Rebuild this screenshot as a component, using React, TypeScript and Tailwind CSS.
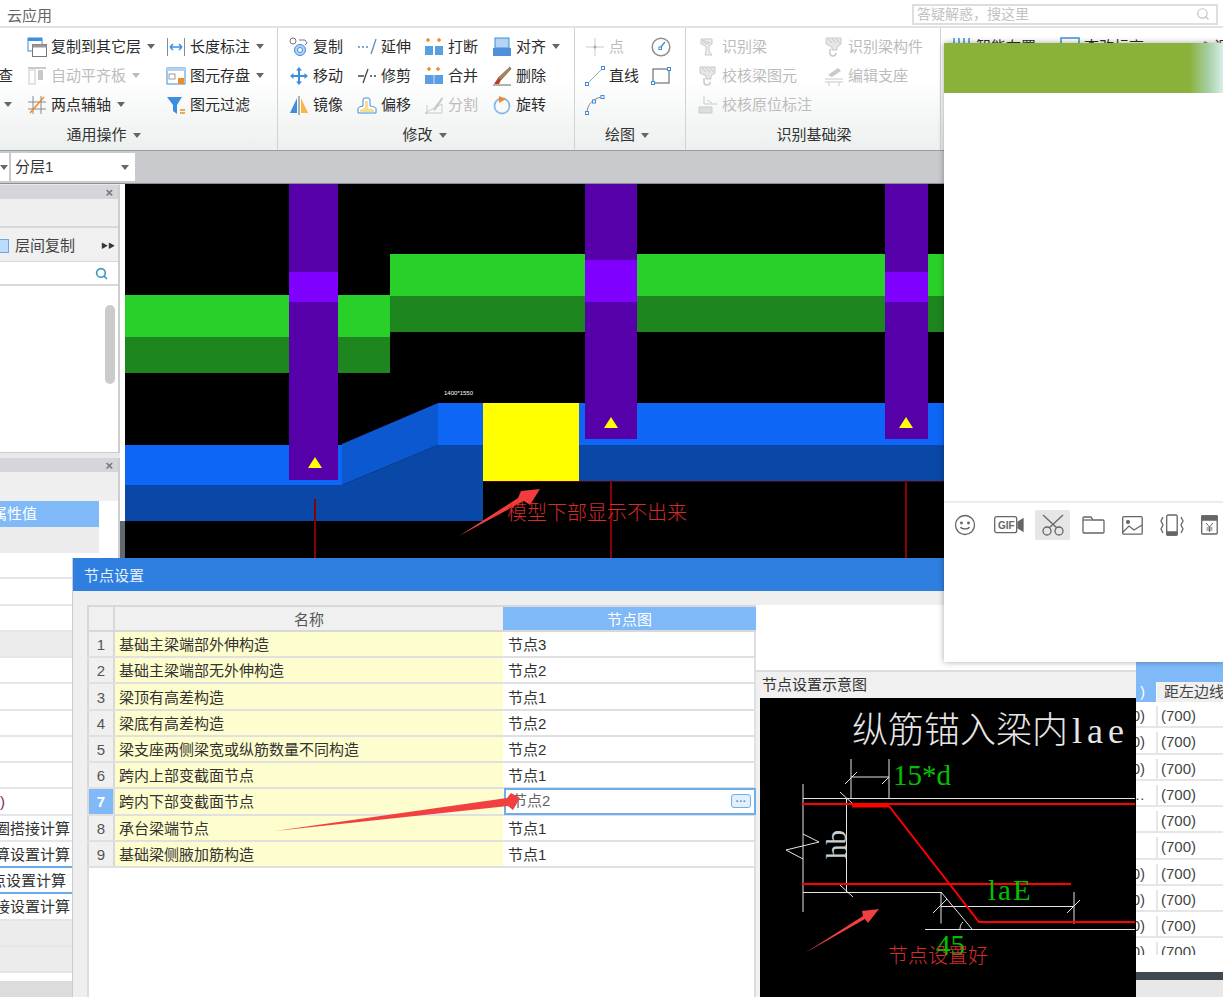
import type { ReactNode } from "react";
import { Search } from "lucide-react";

const BLUE = "#3d8ede";
const LIGHT = "#b5d3f2";
const ORANGE = "#f08a24";
const GRAY = "#8a8a8a";
const OFF = "#c9c9c9";

// ribbon icons, all on a 20x20 box
const icons: Record<string, ReactNode> = {
  copyLayer: (
    <>
      <rect x="1" y="1" width="14" height="13" fill="#fff" stroke={BLUE} />
      <rect x="1" y="1" width="14" height="3" fill={BLUE} />
      <rect x="5.5" y="7.5" width="14" height="12" fill="#fff" stroke="#777" />
      <rect x="5.5" y="7.5" width="14" height="3" fill="#999" />
    </>
  ),
  autoAlign: (
    <>
      <path d="M1 2h18" stroke={OFF} strokeWidth="2" />
      <rect x="2" y="4" width="6" height="14" fill="#fff" stroke={OFF} />
      <rect x="11" y="4" width="5" height="10" fill={OFF} />
    </>
  ),
  twoPoint: (
    <>
      <path d="M6 1v18M14 1v18M1 7h18M1 14h18" stroke={GRAY} fill="none" />
      <path d="M3 18L17 2" stroke={ORANGE} strokeWidth="1.5" />
    </>
  ),
  lengthDim: (
    <>
      <path d="M1.5 1v18M18.500 1v18" stroke={GRAY} />
      <path d="M4 10h12M4 10l3-3M4 10l3 3M16 10l-3-3M16 10l-3 3" stroke={BLUE} strokeWidth="1.5" fill="none" />
    </>
  ),
  saveElem: (
    <>
      <rect x="1" y="2" width="18" height="16" fill="#fff" stroke={BLUE} />
      <rect x="1" y="2" width="18" height="3" fill={LIGHT} />
      <rect x="3" y="8" width="6" height="5" fill="none" stroke="#999" />
      <rect x="12" y="12" width="6" height="6" fill={ORANGE} />
    </>
  ),
  filter: (
    <>
      <path d="M1 2h15l-5 8v9l-4-3v-6z" fill={BLUE} />
      <path d="M14 15h5M14 18h5" stroke={ORANGE} strokeWidth="1.500" />
    </>
  ),
  copy: (
    <>
      <circle cx="4" cy="4" r="3" fill="#fff" stroke="#777" />
      <path d="M10 3h6l2 3-2 2" fill="none" stroke="#777" />
      <circle cx="11" cy="13" r="5.500" fill={LIGHT} stroke={BLUE} />
      <circle cx="11" cy="13" r="2.500" fill="#fff" stroke={BLUE} />
    </>
  ),
  move: (
    <path
      d="M10 1l3 3.500h-2V9h4.500V7l3.500 3-3.500 3v-2H11v4.500h2L10 19l-3-3.500h2V11H4.500v2L1 10l3.500-3v2H9V4.500H7z"
      fill={BLUE}
    />
  ),
  extend: <path d="M1 10h2M5 10h2M9 10h2M14 17l5-15" stroke="#5b8dbf" strokeWidth="1.300" fill="none" />,
  trim: <path d="M1 10h6M13 10h2M17 10h2M6 17l5-14" stroke="#444" strokeWidth="1.300" fill="none" />,
  breakEl: (
    <>
      <path d="M4 1v4M2 3h4M15 1v4M13 3h4" stroke={ORANGE} strokeWidth="1.500" />
      <rect x="1" y="9" width="8" height="9" fill="#5a9fe2" />
      <rect x="11" y="9" width="8" height="9" fill="#5a9fe2" />
    </>
  ),
  merge: (
    <>
      <path d="M5 1v4M3 3h4M14 1v4M12 3h4" stroke={ORANGE} strokeWidth="1.500" />
      <rect x="1" y="9" width="18" height="9" fill="#5a9fe2" />
      <path d="M10 9v9" stroke="#cfe2f6" />
    </>
  ),
  align: (
    <>
      <rect x="3" y="1" width="14" height="10" fill={LIGHT} stroke={BLUE} />
      <rect x="1" y="11" width="18" height="8" fill="#4f90d8" />
    </>
  ),
  brush: (
    <>
      <path d="M18 1l1 2L9 14l-3-2z" fill="#a98655" stroke="#6a5232" strokeWidth=".6" />
      <path d="M6 12l3 2-2 4H2z" fill="#b5431a" />
      <path d="M1 19h18" stroke="#666" />
    </>
  ),
  mirror: (
    <>
      <path d="M8 3L1 18h7z" fill={BLUE} />
      <path d="M12 3l7 15h-7z" fill="#f4b942" />
      <path d="M10 1v19" stroke="#666" />
    </>
  ),
  offset: (
    <>
      <path d="M1 18v-4c0-2 2-2 5-3V5a2 2 0 012-2h3a2 2 0 012 2v6c4 1 6 1 6 3v4z" fill="#fff" stroke={BLUE} />
      <path d="M3 17v-2c0-1 3-1 5-2V6h3v7c2 1 6 1 6 2v2z" fill="#f8dc92" />
    </>
  ),
  split: (
    <>
      <path d="M1 18h17V9L1 18zM3 10v9" fill="none" stroke={OFF} />
      <path d="M9 14l9-12 1 2-8 12z" fill={OFF} />
    </>
  ),
  rotate: (
    <>
      <circle cx="10" cy="11" r="7.500" fill="none" stroke="#8bb9e8" strokeWidth="1.800" />
      <path d="M7 1l7 3-7 4z" fill={ORANGE} />
    </>
  ),
  point: (
    <>
      <path d="M1 10h18M10 1v18" stroke={OFF} />
      <circle cx="10" cy="10" r="1.500" fill="#aaa" />
    </>
  ),
  line: (
    <>
      <path d="M2 18L18 2" stroke="#8aa8c8" />
      <rect x="0.500" y="16.500" width="3" height="3" fill="#fff" stroke={BLUE} />
      <rect x="16.500" y="0.500" width="3" height="3" fill="#fff" stroke={BLUE} />
    </>
  ),
  arc: (
    <>
      <path d="M2 18C2 10 8 3 17 2" fill="none" stroke="#888" />
      <rect x="0.500" y="16.500" width="3" height="3" fill="#fff" stroke={BLUE} />
      <rect x="7.500" y="5" width="3" height="3" fill="#fff" stroke={BLUE} />
      <rect x="16" y="0.500" width="3" height="3" fill="#fff" stroke={BLUE} />
    </>
  ),
  dial: (
    <>
      <circle cx="10" cy="10" r="8.800" fill="#fff" stroke="#8a8f94" strokeWidth="1.500" />
      <path d="M9 11l5-6" stroke={BLUE} strokeWidth="1.300" />
      <rect x="8" y="10" width="2.500" height="2.500" fill="#fff" stroke={BLUE} />
    </>
  ),
  rectEl: (
    <>
      <rect x="2" y="3" width="16" height="14" fill="none" stroke="#555" />
      <rect x="0.500" y="15.500" width="3" height="3" fill="#fff" stroke={BLUE} />
      <rect x="16.500" y="1.500" width="3" height="3" fill="#fff" stroke={BLUE} />
    </>
  ),
  beam: (
    <>
      <path d="M3 2h11v5l-3 2v5l3 4H7l1-4V9L3 7z" fill="#eee" stroke={OFF} />
      <path d="M4 3l9 3M4 5l7 2" stroke={OFF} />
    </>
  ),
  beamCheck: (
    <>
      <path d="M2 1h15v6l-4 3v3H8v-3L2 7z" fill="#e6e6e6" stroke={OFF} />
      <path d="M4 2l4 4M8 2l4 4M12 2l4 4" stroke={OFF} />
      <path d="M6 12v4a3 3 0 006 0" fill="none" stroke={OFF} strokeWidth="1.500" />
    </>
  ),
  origMark: (
    <>
      <path d="M6 1v8h13" fill="none" stroke={OFF} />
      <path d="M1 12h13v6H1z" fill="#ddd" stroke={OFF} />
      <path d="M9 5l5 3" stroke={OFF} />
    </>
  ),
  support: (
    <>
      <path d="M4 9l10-7 3 3-9 6z" fill={OFF} />
      <path d="M1 13h18M1 16h18M5 16v4M15 16v4" stroke={OFF} />
    </>
  ),
  smart: <path d="M2 1v16M7 1v16M12 1v16M17 1v16M0 8h19" stroke={BLUE} strokeWidth="1.500" />,
  level: (
    <>
      <rect x="1" y="1" width="18" height="12" fill="#fff" stroke={BLUE} strokeWidth="1.500" />
      <path d="M3 17h14" stroke={ORANGE} />
    </>
  ),
  tool: <path d="M2 18L15 4l3 2L6 19z" fill="#888" />,
};

type Item = { icon?: string; text?: string; caret?: boolean; off?: boolean };

function Caret({ light }: { light?: boolean }) {
  return (
    <svg width="8" height="5" viewBox="0 0 8 5" className="shrink-0">
      <path d="M0 0h8L4 5z" fill={light ? "#bbb" : "#666"} />
    </svg>
  );
}

function RibbonItem({ icon, text, caret, off }: Item) {
  return (
    <div className={`flex h-[29px] items-center whitespace-nowrap ${off ? "text-[#bcbcbc]" : "text-[#2b2b2b]"}`}>
      {icon && (
        <svg width="20" height="20" viewBox="0 0 20 20" className="mr-1 shrink-0">
          {icons[icon]}
        </svg>
      )}
      {text}
      {caret && (
        <span className="ml-[6px]">
          <Caret light={off} />
        </span>
      )}
    </div>
  );
}

function RibbonGroup({
  cls,
  labelCls,
  label,
  caret,
  cols,
}: {
  cls: string;
  labelCls: string;
  label: string;
  caret?: boolean;
  cols: { w: string; items: Item[] }[];
}) {
  return (
    <div className={`flex shrink-0 flex-col border-r border-[#d0d3d6] ${cls}`}>
      <div className="flex h-[91px] pt-[4px]">
        {cols.map((c, i) => (
          <div key={i} className={`shrink-0 ${c.w}`}>
            {c.items.map((it, j) => (
              <RibbonItem key={j} {...it} />
            ))}
          </div>
        ))}
      </div>
      <div className={`flex h-[31px] items-center justify-center gap-[6px] pt-[1px] text-[#333] ${labelCls}`}>
        {label}
        {caret && <Caret />}
      </div>
    </div>
  );
}

function Ribbon() {
  return (
    <div className="flex h-[123px] overflow-hidden border-b border-[#9a9c9e] bg-[linear-gradient(180deg,#ffffff_40%,#edf0f0_100%)]">
      <RibbonGroup
        cls="w-[278px]"
        labelCls="pr-[70px]"
        label="通用操作"
        caret
        cols={[
          {
            w: "w-[27px] ml-[-2px] mr-[2px]",
            items: [{}, { text: "查" }, { caret: true }],
          },
          {
            w: "w-[139px]",
            items: [
              { icon: "copyLayer", text: "复制到其它层", caret: true },
              { icon: "autoAlign", text: "自动平齐板", caret: true, off: true },
              { icon: "twoPoint", text: "两点辅轴", caret: true },
            ],
          },
          {
            w: "w-[111px]",
            items: [
              { icon: "lengthDim", text: "长度标注", caret: true },
              { icon: "saveElem", text: "图元存盘", caret: true },
              { icon: "filter", text: "图元过滤" },
            ],
          },
        ]}
      />
      <RibbonGroup
        cls="w-[297px] pl-[11px]"
        labelCls="pr-[14px]"
        label="修改"
        caret
        cols={[
          {
            w: "w-[68px]",
            items: [
              { icon: "copy", text: "复制" },
              { icon: "move", text: "移动" },
              { icon: "mirror", text: "镜像" },
            ],
          },
          {
            w: "w-[67px]",
            items: [
              { icon: "extend", text: "延伸" },
              { icon: "trim", text: "修剪" },
              { icon: "offset", text: "偏移" },
            ],
          },
          {
            w: "w-[68px]",
            items: [
              { icon: "breakEl", text: "打断" },
              { icon: "merge", text: "合并" },
              { icon: "split", text: "分割", off: true },
            ],
          },
          {
            w: "w-[82px]",
            items: [
              { icon: "align", text: "对齐", caret: true },
              { icon: "brush", text: "删除" },
              { icon: "rotate", text: "旋转" },
            ],
          },
        ]}
      />
      <RibbonGroup
        cls="w-[111px] pl-[10px]"
        labelCls="pr-[16px]"
        label="绘图"
        caret
        cols={[
          {
            w: "w-[66px]",
            items: [{ icon: "point", text: "点", off: true }, { icon: "line", text: "直线" }, { icon: "arc" }],
          },
          {
            w: "w-[24px]",
            items: [{ icon: "dial" }, { icon: "rectEl" }],
          },
        ]}
      />
      <RibbonGroup
        cls="w-[255px] pl-[12px]"
        labelCls="pr-[10px]"
        label="识别基础梁"
        cols={[
          {
            w: "w-[126px]",
            items: [
              { icon: "beam", text: "识别梁", off: true },
              { icon: "beamCheck", text: "校核梁图元", off: true },
              { icon: "origMark", text: "校核原位标注", off: true },
            ],
          },
          {
            w: "w-[110px]",
            items: [
              { icon: "beamCheck", text: "识别梁构件", off: true },
              { icon: "support", text: "编辑支座", off: true },
            ],
          },
        ]}
      />
      <div className="flex pt-[4px] pl-[11px]">
        <div className="w-[108px]">
          <RibbonItem icon="smart" text="智能布置" />
        </div>
        <div className="w-[130px]">
          <RibbonItem icon="level" text="查改标高" />
        </div>
        <RibbonItem icon="tool" text="调" />
      </div>
    </div>
  );
}

const leftRows: { text?: string; gray?: boolean; line?: boolean; inset?: boolean }[] = [
  {},
  {},
  {},
  { gray: true },
  {},
  {},
  {},
  {},
  {},
  { text: ")" },
  { text: "圈搭接计算" },
  { text: "算设置计算", line: true },
  { text: "点设置计算", line: true, inset: true },
  { text: "接设置计算" },
  { gray: true },
  { gray: true },
];

function PanelTitle() {
  return (
    <div className="flex h-[14px] items-center justify-end bg-[#d4d6db] pr-[5px] text-[13px] leading-none font-bold text-[#777]">×</div>
  );
}

function LeftPanels() {
  return (
    <div className="flex w-[120px] shrink-0 flex-col bg-[#e9e9e9] pt-px">
      <div className="flex h-[268px] flex-col border-r-2 border-b border-[#cdcdcd] bg-white">
        <PanelTitle />
        <div className="h-[29px] border-b-2 border-[#d8d8d8] bg-[#efefef]" />
        <div className="flex h-[34px] items-center border-b border-[#d8d8d8] bg-[#f0f0f0] pt-[3px]">
          <div className="h-[14px] w-[9px] border border-l-0 border-[#6ca8e6] bg-[#bcdcfa]" />
          <span className="ml-[6px] text-[#444]">层间复制</span>
          <span className="ml-auto pr-[3px] text-[7px] text-[#333]">▶▶</span>
        </div>
        <div className="flex h-[24px] items-center justify-end border-b-2 border-[#d8d8d8] pr-[10px]">
          <Search size={13} strokeWidth={3} className="text-[#3f94c4]" />
        </div>
        <div className="flex flex-1 justify-end pt-[19px] pr-[3px]">
          <div className="h-[79px] w-[10px] rounded-full bg-[#cbcbcb]" />
        </div>
      </div>
      <div className="mt-[5px] flex flex-1 flex-col border-r-2 border-[#cdcdcd] bg-white">
        <PanelTitle />
        <div className="h-[29px] bg-[#efefef]" />
        <div className="flex h-[26px] w-[99px] items-center justify-end bg-[#7fb9f8] pr-[62px] whitespace-nowrap text-white">属性值</div>
        <div className="h-[26px] w-[99px] bg-[#ececec]" />
        <div className="flex h-[420px] flex-col">
          {leftRows.map((r, i) => (
            <div
              key={i}
              className={`flex flex-1 items-center border-b-2 pt-[2px] whitespace-nowrap text-[#333] ${
                r.line ? "border-[#6aa9ea]" : "border-[#e6e6e6]"
              } ${r.gray ? "bg-[#ececec]" : "bg-white"}`}
            >
              {r.text === ")" ? (
                <span className="text-[#7a2a6a]">)</span>
              ) : (
                <span className={`flex w-[70px] justify-end overflow-hidden ${r.inset ? "pr-[4px]" : ""}`}>
                  <span className="shrink-0">{r.text}</span>
                </span>
              )}
            </div>
          ))}
        </div>
        <div className="h-[8px]" />
        <div className="flex-1 bg-[#dcdcdc]" />
      </div>
    </div>
  );
}

function CadView() {
  return (
    <svg width="819" height="374" viewBox="125 184 819 374" className="block shrink-0 bg-black">
      <rect x="125" y="295" width="265" height="42" fill="#2ad02a" />
      <rect x="125" y="337" width="265" height="36" fill="#1e861e" />
      <rect x="390" y="254" width="554" height="42" fill="#2ad02a" />
      <rect x="390" y="296" width="554" height="36" fill="#1e861e" />

      <path d="M125 445h217v40H125z" fill="#0d66f5" />
      <path d="M342 444l96-41v42l-96 40z" fill="#0b58d0" />
      <path d="M125 485h217l96-40h45v76H125z" fill="#0a48a8" />
      <rect x="438" y="403" width="45" height="42" fill="#0d66f5" />
      <rect x="579" y="403" width="365" height="42" fill="#0d66f5" />
      <rect x="579" y="445" width="365" height="36" fill="#0a48a8" />
      <rect x="483" y="403" width="96" height="78" fill="#ffff00" />

      <path d="M315 499v59M611 481v77M906 481v77" stroke="#8b0000" strokeWidth="2" />
      <path d="M483 481.500h460" stroke="#5a0000" />

      <rect x="289" y="184" width="49" height="296" fill="#5500a8" />
      <rect x="585" y="184" width="52" height="255" fill="#5500a8" />
      <rect x="885" y="184" width="43" height="255" fill="#5500a8" />
      <rect x="289" y="272" width="49" height="30" fill="#8000ff" />
      <rect x="585" y="260" width="52" height="42" fill="#8000ff" />
      <rect x="885" y="272" width="43" height="30" fill="#8000ff" />

      <path d="M315 457l7 11h-14zM611 417l7 11h-14zM906 417l7 11h-14z" fill="#ffff00" />

      <text x="444" y="395" fontSize="6" fill="#fff" fontFamily="Liberation Sans">1400*1550</text>

      <path d="M459 536l59-38 3-7 19-2-10 16-6-4z" fill="#f03c3c" />
      <text x="507" y="520" fontSize="20" fill="#d42b2b" fontFamily="Noto Sans CJK SC" fontWeight="300">模型下部显示不出来</text>
    </svg>
  );
}

function BackTable() {
  const left = ["0)", "0)", "0)", "…", "", "", "0)", "0)", "0)", "0)"];
  return (
    <div className="flex h-[335px] w-[87px] flex-col bg-white">
      <div className="h-[20px] bg-[#7fb9f8]" />
      <div className="flex h-[20px] whitespace-nowrap">
        <div className="w-[20px] bg-[#7fb9f8] pr-[11px] text-right text-white">)</div>
        <div className="flex-1 overflow-hidden border-l border-white bg-[#f0f0f0] pl-[7px] text-[#444]">距左边线</div>
      </div>
      <div className="h-[253px] overflow-hidden">
        {left.map((t, i) => (
          <div key={i} className="flex h-[26.250px] border-b-2 border-[#e6e6e6] pt-[4px] text-[#444]">
            <div className="flex w-[20px] items-center justify-end overflow-hidden pr-[11px] whitespace-nowrap">{t}</div>
            <div className="flex flex-1 items-center border-l-2 border-[#e6e6e6] pl-[3px]">(700)</div>
          </div>
        ))}
      </div>
      <div className="h-[17px]" />
      <div className="h-[8px] bg-[#404850]" />
      <div className="flex-1 bg-[#e8e8e8]" />
    </div>
  );
}

const nodeRows = [
  ["基础主梁端部外伸构造", "节点3"],
  ["基础主梁端部无外伸构造", "节点2"],
  ["梁顶有高差构造", "节点1"],
  ["梁底有高差构造", "节点2"],
  ["梁支座两侧梁宽或纵筋数量不同构造", "节点2"],
  ["跨内上部变截面节点", "节点1"],
  ["跨内下部变截面节点", "节点2"],
  ["承台梁端节点", "节点1"],
  ["基础梁侧腋加筋构造", "节点1"],
];

function NodeTable() {
  return (
    <div className="flex w-[669px] shrink-0 flex-col bg-white">
      <div className="flex h-[27px] border-y-2 border-[#d8d8d8] bg-[#f0f0f0] text-[#555]">
        <div className="w-[28px] shrink-0 border-x-2 border-[#d8d8d8]" />
        <div className="flex w-[388px] shrink-0 items-center justify-center pt-[2px]">名称</div>
        <div className="flex flex-1 items-center justify-center bg-[#7fb9f8] pt-[2px] text-white">节点图</div>
      </div>
      <div className="flex h-[236px] flex-col">
        {nodeRows.map(([name, node], i) => {
          const active = i === 6;
          return (
            <div key={name} className="flex flex-1 border-b-2 border-[#e0e0e0]">
              <div
                className={`flex w-[28px] shrink-0 items-center justify-center border-x-2 border-[#d8d8d8] pt-[2px] ${
                  active ? "bg-[#7fb9f8] font-bold text-white" : "bg-[#f0f0f0] text-[#555]"
                }`}
              >
                {i + 1}
              </div>
              <div className="flex w-[388px] shrink-0 items-center bg-[#fefdcd] pt-[2px] pl-[4px] whitespace-nowrap text-[#333]">{name}</div>
              {active ? (
                <div className="-my-[1px] ml-[1px] flex flex-1 items-center border-2 border-[#6caeee] pr-[3px] pl-[6px] text-[#666]">
                  {node}
                  <div className="ml-auto flex h-[14px] w-[20px] items-center justify-center rounded-[3px] border border-[#6caeee] bg-[#e3effb] text-[11px] leading-none font-bold text-[#5a8fc8]">
                    ···
                  </div>
                </div>
              ) : (
                <div className="ml-[1px] flex flex-1 items-center border-r-2 border-[#e0e0e0] pt-[2px] pl-[4px] text-[#333]">{node}</div>
              )}
            </div>
          );
        })}
      </div>
      <div className="flex-1 border-x-2 border-[#dcdcdc]" />
    </div>
  );
}

function Schematic() {
  const serif = "Liberation Serif";
  return (
    <svg width="376" height="299" viewBox="760 698 376 299" className="block bg-black">
      <text x="852" y="743" fontSize="36" fill="#e6e6e6" fontFamily="Noto Sans CJK SC" fontWeight="300">
        纵筋锚入梁内
        <tspan dx="4" fontFamily={serif} letterSpacing="5">lae</tspan>
      </text>
      <g stroke="#e4e4e4" fill="none">
        <path d="M803 784v128M803 798.500h332M851 759v39M889 759v39M851 777h38M845 784l12-12M882 784l7-7" />
        <path d="M846.500 798v94M840 792l13 12M840 885l13 12" />
        <path d="M803 834l16 8-33 8 17 9" />
        <path d="M803 892.500h138v31M941 892l31 37M933 913l14-14M941 906.500h133M1074 892v32M1067 913l13-13M925 929.500h210M960 929c0-3 1-5 3-7" />
      </g>
      <g stroke="#ff0000" strokeWidth="2" fill="none">
        <path d="M802 804h333M802 884h269M889 806l90 116h156" />
        <path d="M852 806h37" strokeWidth="3" />
      </g>
      <text x="893" y="785" fontSize="29" fill="#00c000" fontFamily={serif}>15*d</text>
      <text x="988" y="900" fontSize="29" fill="#00c000" fontFamily={serif} letterSpacing="2">laE</text>
      <text x="936" y="955" fontSize="29" fill="#00c000" fontFamily={serif}>45</text>
      <text x="846" y="859" fontSize="29" fill="#c8d0d0" fontFamily={serif} transform="rotate(-90 846 859)">hb</text>
      <text x="888" y="963" fontSize="20" fill="#d92c2c" fontFamily="Noto Sans CJK SC" fontWeight="300">节点设置好</text>
      <path d="M805 953l58-37-1-5 17-2-11 14-3-4z" fill="#f04040" />
    </svg>
  );
}

function NodeDialog() {
  return (
    <div className="absolute top-[558px] left-[72px] z-10 flex h-[439px] w-[1064px] flex-col border-l border-[#c5ccd8] bg-[#efefef]">
      <div className="flex h-[33px] shrink-0 items-center bg-[#2e7fe0] pt-[2px] pl-[11px] text-[#e8f1fc]">节点设置</div>
      <div className="flex flex-1 pt-[14px] pl-[14px]">
        <NodeTable />
        <div className="flex flex-1 flex-col">
          <div className="h-[65px] bg-white" />
          <div className="flex flex-1 flex-col border-t-2 border-[#dcdcdc] bg-[#f0f0f0] pl-[4px]">
            <div className="flex h-[26px] items-center pl-[2px] text-[#333]">节点设置示意图</div>
            <Schematic />
          </div>
        </div>
      </div>
      {/* 红色标注箭头 */}
      <svg width="260" height="50" viewBox="270 790 260 50" className="absolute top-[232px] left-[197px]">
        <path d="M275 831l232-33 4-5 9 5-7 12-5-4z" fill="#f24040" />
      </svg>
    </div>
  );
}

function ChatWindow() {
  return (
    <div className="absolute top-[43px] left-[944px] z-20 flex h-[619px] w-[279px] flex-col bg-white shadow-[0_0_6px_rgba(0,0,0,0.35)]">
      <div className="h-[50px] bg-[linear-gradient(90deg,#8ab13a_0%,#8ab13a_88%,#a8d0a8_95%,#d8efe6_100%)]" />
      <div className="flex-1" />
      <div className="h-[161px] border-t-2 border-[#ececec]">
        <div className="flex h-[44px] items-center text-[#666]">
          <svg width="22" height="22" viewBox="0 0 22 22" fill="none" stroke="currentColor" strokeWidth="1.300" className="ml-[10px]">
            <circle cx="11" cy="11" r="9.500" />
            <circle cx="7.500" cy="9" r=".8" fill="currentColor" />
            <circle cx="14.500" cy="9" r=".8" fill="currentColor" />
            <path d="M6.500 13c1 2.500 8 2.500 9 0" />
          </svg>
          <svg width="30" height="18" viewBox="0 0 30 18" fill="none" stroke="currentColor" strokeWidth="1.300" className="ml-[18px]">
            <rect x=".7" y=".7" width="22" height="16" rx="2" />
            <path d="M24 6l5-3v12l-5-3z" fill="currentColor" />
            <text x="4" y="13" fontSize="10" fontFamily="Liberation Sans" fill="currentColor" stroke="none" fontWeight="700">GIF</text>
          </svg>
          <div className="ml-[11px] flex h-[30px] w-[35px] items-center justify-center rounded-[2px] bg-[#e6e6e6]">
            <svg width="24" height="22" viewBox="0 0 24 22" fill="none" stroke="currentColor" strokeWidth="1.300">
              <path d="M2 1l14 13M22 1L8 14" />
              <circle cx="6" cy="17" r="4" />
              <circle cx="18" cy="17" r="4" />
            </svg>
          </div>
          <svg width="23" height="18" viewBox="0 0 23 18" fill="none" stroke="currentColor" strokeWidth="1.300" className="ml-[12px]">
            <path d="M1 16V2a1 1 0 011-1h7l2 3h10a1 1 0 011 1v11a1 1 0 01-1 1H2a1 1 0 01-1-1z" />
            <path d="M1 4h10" />
          </svg>
          <svg width="21" height="19" viewBox="0 0 21 19" fill="none" stroke="currentColor" strokeWidth="1.300" className="ml-[17px]">
            <rect x=".7" y=".7" width="19.500" height="17.500" rx="1" />
            <circle cx="6" cy="6" r="1.400" fill="currentColor" />
            <path d="M1 16l6-6 5 4 8-5" />
          </svg>
          <svg width="24" height="22" viewBox="0 0 24 22" fill="none" stroke="currentColor" strokeWidth="1.300" className="ml-[17px]">
            <rect x="6.700" y="1" width="10.500" height="20" rx="1.500" />
            <path d="M7 18h10v3H7z" fill="currentColor" />
            <path d="M3 3L1 7l2 4-2 4 2 4M21 3l2 4-2 4 2 4-2 4" />
          </svg>
          <svg width="17" height="20" viewBox="0 0 17 20" fill="none" stroke="currentColor" strokeWidth="1.300" className="ml-[17px]">
            <rect x=".7" y="1" width="15.500" height="18" rx="1" />
            <path d="M1 1h15v4H1z" fill="currentColor" />
            <path d="M5 8l3.500 4L12 8M8.500 12v5M5.500 13h6M5.500 15h6" strokeWidth="1" />
          </svg>
        </div>
      </div>
    </div>
  );
}

export default function App() {
  return (
    <div className="relative h-[997px] w-[1223px] overflow-hidden bg-white font-['Liberation_Sans','Noto_Sans_CJK_SC',sans-serif] text-[15px] leading-[20px]">
      <div className="flex h-[28px] items-center justify-between border-b-2 border-[#e2e2e2] pt-[2px] pr-[5px] pl-[7px]">
        <span className="pt-[3px] text-[#666]">云应用</span>
        <div className="flex h-[21px] w-[306px] items-center justify-between border-2 border-[#dedede] pr-[6px] pl-[3px] text-[14px] text-[#c2c2c2]">
          答疑解惑，搜这里
          <Search size={14} />
        </div>
      </div>
      <Ribbon />
      <div className="flex h-[33px] items-center border-b border-[#8d8f92] bg-[#c8cacd]">
        <div className="flex h-[28px] w-[9px] items-center bg-white">
          <Caret />
        </div>
        <div className="ml-[2px] flex h-[28px] w-[124px] items-center justify-between bg-white pr-[6px] pl-[4px] text-[#333]">
          分层1
          <Caret />
        </div>
      </div>
      <div className="flex h-[813px]">
        <LeftPanels />
        <div className="flex w-[5px] shrink-0 flex-col">
          <div className="h-[337px] bg-white" />
          <div className="flex-1 bg-[#606870]" />
        </div>
        <div className="flex flex-1 flex-col overflow-hidden">
          <CadView />
          <div className="flex flex-1 flex-col items-end pt-[104px]">
            <BackTable />
          </div>
        </div>
      </div>
      <NodeDialog />
      <ChatWindow />
    </div>
  );
}
